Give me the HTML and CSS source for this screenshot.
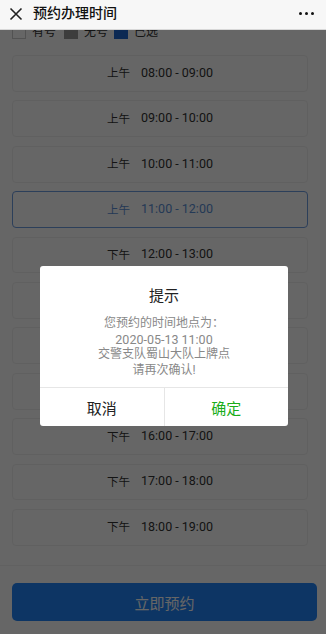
FILE: index.html
```html
<!DOCTYPE html>
<html lang="zh-CN">
<head>
<meta charset="utf-8">
<title>预约办理时间</title>
<link rel="stylesheet" href="styles.css">
</head>
<body>
<div class="page">
  <header class="topbar">
    <svg class="close" width="14" height="14" viewBox="0 0 14 14"><path d="M1.5 1.5 L12.5 12.5 M12.5 1.5 L1.5 12.5" stroke="#222" stroke-width="1.6" fill="none"/></svg>
    <span class="title">预约办理时间</span>
    <span class="more"><i></i><i></i><i></i></span>
  </header>
  <main class="main">
    <div class="legend">
      <span class="sq sq-free"></span><span class="lg-txt">有号</span>
      <span class="sq sq-none"></span><span class="lg-txt">无号</span>
      <span class="sq sq-sel"></span><span class="lg-txt">已选</span>
    </div>
    <ul class="slots">
      <li class="slot"><span class="ap">上午</span><span class="tm">08:00 - 09:00</span></li>
      <li class="slot"><span class="ap">上午</span><span class="tm">09:00 - 10:00</span></li>
      <li class="slot"><span class="ap">上午</span><span class="tm">10:00 - 11:00</span></li>
      <li class="slot selected"><span class="ap">上午</span><span class="tm">11:00 - 12:00</span></li>
      <li class="slot"><span class="ap">下午</span><span class="tm">12:00 - 13:00</span></li>
      <li class="slot"><span class="ap">下午</span><span class="tm">13:00 - 14:00</span></li>
      <li class="slot"><span class="ap">下午</span><span class="tm">14:00 - 15:00</span></li>
      <li class="slot"><span class="ap">下午</span><span class="tm">15:00 - 16:00</span></li>
      <li class="slot"><span class="ap">下午</span><span class="tm">16:00 - 17:00</span></li>
      <li class="slot"><span class="ap">下午</span><span class="tm">17:00 - 18:00</span></li>
      <li class="slot"><span class="ap">下午</span><span class="tm">18:00 - 19:00</span></li>
    </ul>
  </main>
  <footer class="bottom">
    <button class="book">立即预约</button>
  </footer>
  <div class="mask"></div>
  <div class="dialog">
    <div class="dlg-title">提示</div>
    <div class="dlg-body">
      <p>您预约的时间地点为：</p>
      <p class="num">2020-05-13 11:00</p>
      <p>交警支队蜀山大队上牌点</p>
      <p>请再次确认!</p>
    </div>
    <div class="dlg-btns">
      <span class="btn-cancel">取消</span>
      <span class="btn-ok">确定</span>
    </div>
  </div>
</div>
</body>
</html>
```
FILE: styles.css
```css
* { box-sizing: border-box; margin: 0; padding: 0; }
html, body { width: 326px; height: 634px; overflow: hidden; }
body {
  font-family: Roboto, "Noto Sans CJK SC", sans-serif;
  background: #fff;
  color: #333;
}
.page {
  position: relative;
  height: 634px;
  display: flex;
  flex-direction: column;
}
.topbar {
  height: 30px;
  flex: none;
  display: flex;
  align-items: center;
  padding: 0 10px 0 9px;
  background: #f7f7f7;
  border-bottom: 1px solid #d8d8d8;
  position: relative;
  z-index: 3;
}
.close { flex: none; margin-top: -2px; }
.title {
  margin-left: 10px;
  font-size: 14px;
  font-weight: 500;
  color: #111;
  flex: 1;
  line-height: 1;
  margin-top: -3px;
}
.more { display: flex; gap: 3px; margin-right: 2px; margin-top: -3px; }
.more i { width: 3px; height: 3px; background: #111; border-radius: 50%; display: block; }

.main {
  flex: 1;
  overflow: hidden;
  background: #fff;
  padding: 0 12px;
}
.legend {
  margin-top: -5px;
  height: 14px;
  display: flex;
  align-items: center;
  font-size: 12px;
  color: #333;
}
.sq { width: 14px; height: 14px; display: block; flex: none; }
.sq-free { border: 1px solid #ccc; background: #fff; }
.sq-none { background: #9a9a9a; margin-left: 8px; }
.sq-sel { background: #1e66d0; margin-left: 6px; }
.lg-txt { margin-left: 6px; line-height: 14px; }

.slots {
  list-style: none;
  margin-top: 16px;
  width: 296px;
  display: flex;
  flex-direction: column;
  gap: 8.6px;
}
.slot {
  height: 36.8px;
  border: 1px solid #f0f0f0;
  border-radius: 4px;
  background: #fff;
  display: flex;
  align-items: center;
  justify-content: center;
  font-size: 12px;
  color: #333;
  padding-bottom: 2px;
}
.slot .ap { margin-right: 11px; font-size: 11.5px; }
.slot .tm { font-size: 12.5px; }
.slot.selected {
  border-color: #6f9de0;
  color: #5b8fd6;
}

.bottom {
  flex: none;
  height: 69px;
  border-top: 1px solid #f2f2f2;
  background: #fff;
  padding: 17px 9px 0 12px;
}
.book {
  width: 305px;
  height: 38px;
  border: none;
  border-radius: 5px;
  background: #2286fb;
  color: #fff;
  font-family: inherit;
  font-size: 15px;
  display: block;
}

.mask {
  position: absolute;
  left: 0; right: 0; top: 30px; bottom: 0;
  background: rgba(0, 0, 0, 0.6);
  z-index: 4;
}
.dialog {
  position: absolute;
  left: 40px;
  top: 266px;
  width: 248px;
  height: 160px;
  background: #fff;
  border-radius: 3px;
  z-index: 5;
  display: flex;
  flex-direction: column;
  text-align: center;
}
.dlg-title {
  font-size: 15px;
  color: #222;
  margin-top: 20px;
  line-height: 20px;
}
.dlg-body {
  font-size: 12px;
  color: #888;
  line-height: 15.7px;
  margin-top: 10px;
  height: 71px;
}
.dlg-body .num { font-size: 12.5px; }
.dlg-btns {
  flex: 1;
  display: flex;
  border-top: 1px solid #e6e6e6;
}
.dlg-btns span {
  flex: 1;
  display: flex;
  align-items: center;
  justify-content: center;
  font-size: 15px;
}
.btn-cancel { color: #222; border-right: 1px solid #e6e6e6; }
.btn-ok { color: #1aad19; }
```
